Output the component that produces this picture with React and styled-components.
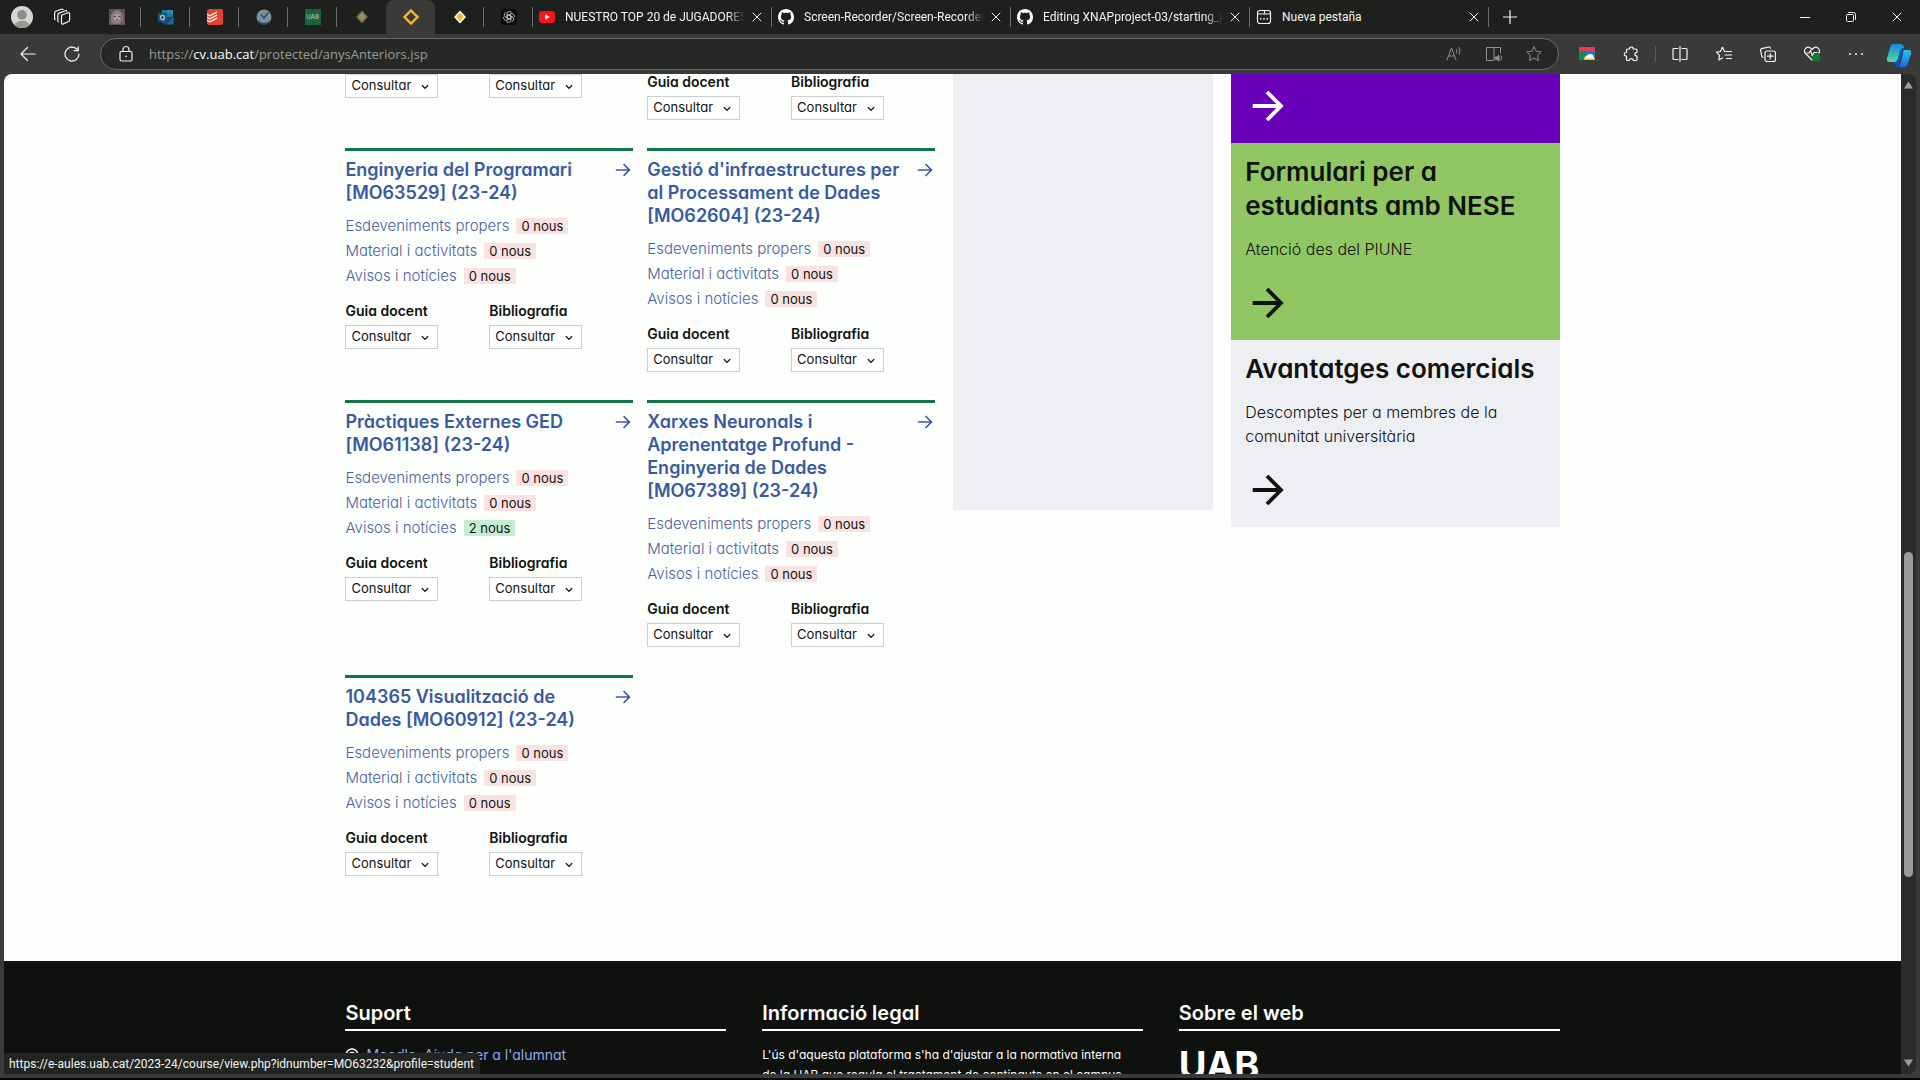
import React from 'react';
import styled, { createGlobalStyle } from 'styled-components';

const Global = createGlobalStyle`
  * { box-sizing: border-box; }
  body { margin: 0; background: #0c0c0c; overflow: hidden; }
  h2, h3, p, ul { margin: 0; padding: 0; }
  ul { list-style: none; }
  a { text-decoration: none; color: inherit; }
  button { border: 0; padding: 0; background: none; color: inherit; font: inherit; }
  svg { display: block; flex: none; }
`;

const ui = `"Open Sans", "Noto Sans", sans-serif`;
const uiSmall = `Roboto, "Open Sans", sans-serif`;

/* ---------- browser window ---------- */

const Window = styled.div`
  display: flex;
  flex-direction: column;
  height: 100vh;
  font-family: ${ui};
  color: #f4f4f2;
  background: #3a3b39;
  border-bottom: 2px solid #050505;
`;

const TabStrip = styled.header`
  display: flex;
  align-items: center;
  height: 34px;
  flex: none;
  background: #1e201d;
`;

const Profile = styled.div`
  display: flex;
  align-items: center;
  gap: 20px;
  width: 92px;
  padding-left: 11px;
  flex: none;
`;

const Pinned = styled.button`
  display: grid;
  place-items: center;
  width: 49px;
  height: 34px;
  flex: none;
  border-radius: 8px 8px 0 0;
  background: ${(p) => (p.$active ? '#3a3b39' : 'transparent')};
  background-image: ${(p) => (p.$divider ? 'linear-gradient(#6c6d6b, #6c6d6b)' : 'none')};
  background-size: 1px 20px;
  background-repeat: no-repeat;
  background-position: right center;
`;

const Tab = styled.div`
  display: flex;
  align-items: center;
  width: 239px;
  height: 20px;
  padding: 0 8px 0 6px;
  flex: none;
  border-right: 1px solid #6c6d6b;
`;

const TabTitle = styled.span`
  flex: 1;
  margin: 0 6px 0 10px;
  overflow: hidden;
  white-space: nowrap;
  font-family: ${uiSmall};
  font-size: 12px;
  line-height: 16px;
  mask-image: ${(p) => (p.$fade ? 'linear-gradient(90deg, #000 90%, transparent)' : 'none')};
`;

const IconButton = styled.button`
  display: grid;
  place-items: center;
  width: ${(p) => p.$w || 20}px;
  height: 20px;
  flex: none;
  color: ${(p) => (p.$dim ? '#8f908e' : '#f4f4f2')};
`;

const WindowControls = styled.div`
  display: flex;
  margin-left: auto;
`;

const Toolbar = styled.div`
  display: flex;
  align-items: center;
  height: 40px;
  padding: 0 0 0 6px;
  flex: none;
`;

const AddressBar = styled.div`
  display: flex;
  align-items: center;
  flex: 1;
  height: 32px;
  margin-left: 6px;
  padding: 0 4px 0 16px;
  border: 1px solid #6a6b69;
  border-radius: 16px;
  background: #262825;
`;

const UrlField = styled.label`
  display: grid;
  align-items: center;
  flex: 1;
  margin-left: 14px;
  font-size: 13px;
  line-height: 20px;
  color: #9a9b99;
  > * { grid-area: 1 / 1; }
  b { font-weight: 400; color: #fff; }
`;

const UrlInput = styled.input`
  width: 100%;
  padding: 0;
  border: 0;
  outline: 0;
  background: transparent;
  color: #fff;
  font: inherit;
`;

const Extensions = styled.div`
  display: flex;
  align-items: center;
  padding-left: 6px;
`;

const Separator = styled.span`
  width: 1px;
  height: 16px;
  margin: 0 2px;
  background: #5a5b59;
`;

const Body = styled.div`
  display: flex;
  flex: 1;
  min-height: 0;
  margin: 0 4px 4px;
  position: relative;
`;

const Page = styled.main`
  display: flex;
  flex-direction: column;
  flex: 1;
  min-width: 0;
  overflow: hidden;
  border-radius: 8px 0 0 0;
  background: #fcfefb;
  color: #10120f;
  font-family: Inter, "Liberation Sans", sans-serif;
  font-feature-settings: "cv11" 1;
`;

const ScrollTrack = styled.div`
  display: flex;
  flex-direction: column;
  align-items: center;
  justify-content: space-between;
  width: 15px;
  padding: 7px 3px;
  border-radius: 0 8px 8px 0;
  background: #2a2b29;
`;

const Thumb = styled.span`
  width: 9px;
  height: 33%;
  margin-top: auto;
  margin-bottom: 182px;
  border-radius: 5px;
  background: #9b9c9a;
`;

const StatusBubble = styled.div`
  position: absolute;
  left: 0;
  bottom: 0;
  height: 21px;
  padding: 0 6px 0 5px;
  border-radius: 0 5px 0 0;
  background: #222421;
  font-family: ${uiSmall};
  font-size: 12px;
  line-height: 22px;
  white-space: nowrap;
`;

/* ---------- campus page ---------- */

const Content = styled.div`
  display: grid;
  grid-template-columns: minmax(0, 589fr) minmax(0, 260fr) minmax(0, 328fr);
  column-gap: 18px;
  align-items: start;
  width: 64%;
  margin: 0 auto;
  padding-bottom: 85px;
  flex: none;
`;

const Courses = styled.div`
  display: grid;
  grid-template-columns: 1fr 1fr;
  gap: 28px 14px;
  align-items: start;
`;

const Card = styled.article`
  border-top: ${(p) => (p.$partial ? 'none' : '3px solid #137547')};
`;

const CardHead = styled.a`
  display: flex;
  justify-content: space-between;
  gap: 10px;
  padding: 7px 2px 9px 0;
  color: #3a5aa0;
  svg { margin-top: 4px; }
`;

const CardTitle = styled.h3`
  font-size: 18px;
  font-weight: 600;
  line-height: 23px;
`;

const NewsRow = styled.li`
  display: flex;
  align-items: center;
  gap: 7px;
  height: 25px;
  font-size: 15px;
  font-weight: 300;
  color: #4a62a2;
`;

const Badge = styled.span`
  height: 16px;
  padding: 0 5px;
  background: ${(p) => (p.$fresh ? '#c5edd3' : '#fbe2e2')};
  color: #10120f;
  font-size: 13px;
  font-weight: 400;
  line-height: 16px;
`;

const Pickers = styled.div`
  display: grid;
  grid-template-columns: 1fr 1fr;
  padding-top: ${(p) => (p.$partial ? 0 : 15)}px;
`;

const PickerLabel = styled.label`
  display: block;
  margin-bottom: 6px;
  font-size: 14px;
  font-weight: 600;
  line-height: 16px;
`;

const SelectBox = styled.div`
  position: relative;
  width: 93px;
  svg { position: absolute; right: 9px; top: 9px; pointer-events: none; }
`;

const Select = styled.select`
  display: block;
  appearance: none;
  width: 100%;
  height: 24px;
  padding: 0 0 2px 5px;
  border: 1px solid #cdcfcf;
  border-radius: 0;
  background: #fff;
  color: #10120f;
  font: 400 13px/18px Inter, "Liberation Sans", sans-serif;
  font-feature-settings: "cv11" 1;
`;

const Agenda = styled.div`
  height: 436px;
  background: #eeeff3;
`;

const Promo = styled.a`
  display: block;
  padding: ${(p) => (p.$partial ? 16 : 12)}px 14px 21px;
  background: ${(p) => p.$bg};
  color: ${(p) => p.$fg || '#10120f'};
  svg { margin-left: 7px; }
`;

const PromoTitle = styled.h2`
  margin-bottom: 14px;
  font-size: 26px;
  font-weight: 600;
  line-height: 34px;
`;

const PromoText = styled.p`
  margin-bottom: 26px;
  font-size: 16px;
  font-weight: 300;
  line-height: 24px;
`;

const Footer = styled.footer`
  flex: 1 0 auto;
  background: #0f110e;
  color: #fff;
`;

const FooterInner = styled.div`
  display: grid;
  grid-template-columns: repeat(3, 1fr);
  gap: 36px;
  width: 64%;
  margin: 0 auto;
  padding-top: 40px;
`;

const FooterTitle = styled.h2`
  height: 30px;
  margin-bottom: 14px;
  border-bottom: 2px solid #fff;
  font-size: 20px;
  font-weight: 600;
  line-height: 24px;
`;

const FooterLink = styled.a`
  display: flex;
  align-items: center;
  gap: 7px;
  font-size: 14px;
  line-height: 20px;
  color: #93a8f0;
`;

const FooterText = styled.p`
  padding-right: 10px;
  font-size: 12px;
  line-height: 20px;
`;

const Logo = styled.p`
  padding-top: 2px;
  font-size: 38px;
  font-weight: 700;
  line-height: 36px;
`;

/* ---------- drawings ---------- */

const Line = ({ s = 16, w = 1, children, vb = 16 }) => (
  <svg width={s} height={s} viewBox={`0 0 ${vb} ${vb}`} fill="none" stroke="currentColor" strokeWidth={w} strokeLinecap="round" strokeLinejoin="round" aria-hidden="true">
    {children}
  </svg>
);

const Close = () => <Line s={10} vb={10}><path d="M1 1l8 8M9 1l-8 8" /></Line>;
const Chevron = () => <Line s={8} vb={8} w={1.2}><path d="M1.200 2.500L4 5.300l2.800-2.800" /></Line>;
const SmallArrow = () => <Line s={16} w={1.7}><path d="M1.500 8h13M9 2.500L14.500 8 9 13.500" /></Line>;
const BigArrow = () => (
  <svg width="32" height="32" viewBox="0 0 32 32" fill="none" stroke="currentColor" strokeWidth="3.8" aria-hidden="true">
    <path d="M.7 16h29M15 2l14 14-14 14" />
  </svg>
);

const Avatar = () => (
  <svg width="22" height="22" viewBox="0 0 22 22">
    <clipPath id="avatar"><circle cx="11" cy="11" r="11" /></clipPath>
    <g clipPath="url(#avatar)">
      <path fill="#d6d6d4" d="M0 0h22v22H0z" />
      <circle cx="11" cy="8.8" r="4.8" fill="#8d8c89" />
      <ellipse cx="11" cy="19" rx="7.2" ry="4.2" fill="#9b9a97" />
    </g>
  </svg>
);
const Workspaces = () => (
  <Line s={18} vb={18} w={1.2}>
    <path d="M8.5 7.2l6.3-2.4q1.8-.5 1.8 1.2v6q0 1-1 1.5l-5.3 2.4q-1.8.7-1.8-1.1zM5.3 13.8q-.5-.4-.5-1.2V7q0-1.4 1.3-1.9l6.2-2.3q1-.3 1.5.5M2.2 11.6q-.6-.3-.6-1.2V5.200q0-1.400 1.200-1.900L8.500 1.200q1-.3 1.500.4" />
  </Line>
);
const Face = () => (
  <svg width="16" height="16" viewBox="0 0 16 16">
    <path fill="#5f5256" d="M0 0h16v16H0z" />
    <path fill="#8d7a80" d="M2 13Q1 2 8 1q7 1 6 10l-3 4H4z" />
    <path fill="#a89898" d="M5 6q3-3 6 0v4q-3 5-6 0z" />
    <path stroke="#54383f" strokeWidth="1" d="M5 7.500h2M9.500 7.500h2M7 11h2" />
    <path fill="#74636a" d="M1 9l3 6H0zM15 9l-2 6h3z" />
  </svg>
);
const Outlook = () => (
  <svg width="16" height="16" viewBox="0 0 16 16">
    <path fill="#1b7798" d="M4 1h11v7H4z" /><path fill="#2b91ad" d="M9.500 1H15v3.500H9.500z" />
    <path fill="#15496f" d="M4 8h11.500v6.500q0 1-1 1H5q-1 0-1-1z" /><path fill="#1e6c93" d="M15.500 8.500v6q0 1-1 1H8z" />
    <rect y="4" width="9" height="9" rx="1" fill="#14508a" />
    <ellipse cx="4.500" cy="8.500" rx="2" ry="2.200" fill="none" stroke="#aebbc4" strokeWidth="1.300" />
  </svg>
);
const Todoist = () => (
  <svg width="16" height="16" viewBox="0 0 16 16">
    <rect width="16" height="16" rx="2" fill="#e44332" />
    <path fill="none" stroke="#fff" strokeWidth="1.300" d="M0 5.200l3 1.600L10 3M0 8.200l3 1.600L10 6M0 11.200l3 1.600L10 9" />
  </svg>
);
const Clock = () => (
  <svg width="16" height="16" viewBox="0 0 16 16">
    <circle cx="8" cy="8" r="7.500" fill="#7f8f9c" /><path fill="#2b4d6e" d="M1 11q2 5 7 5t7-5q-3 3-7 3t-7-3z" />
    <path fill="none" stroke="#234e7e" strokeWidth="1.600" d="M5 5.500L8 9l4.500-5.500" />
  </svg>
);
const UabIcon = styled.span`
  display: block;
  width: 16px;
  height: 16px;
  background: #17633a;
  color: #8db59d;
  font: 700 6px/16px Inter, sans-serif;
  text-align: center;
`;
const Diamond = ({ outer, inner }) => (
  <svg width="18" height="18" viewBox="0 0 18 18">
    <path d="M9 2.500l6 6.500-6 6.500L3 9z" fill={outer} /><path d="M9 4.800l3.800 4.200L9 13.200 5.200 9z" fill={inner} />
  </svg>
);
const DiamondRing = () => (
  <svg width="18" height="18" viewBox="0 0 18 18"><path d="M9 2.500L15.500 9 9 15.500 2.500 9z" fill="none" stroke="#f5b82e" strokeWidth="2.400" /></svg>
);
const Gpt = () => (
  <svg width="16" height="16" viewBox="0 0 16 16">
    <rect width="16" height="16" rx="3" fill="#0a0a0a" />
    <g fill="none" stroke="#c9cac8" strokeWidth=".8">
      {[0, 60, 120, 180, 240, 300].map((a) => (
        <path key={a} transform={`rotate(${a} 8 8)`} d="M6.200 9V4.800Q6.500 2.500 8.800 2.500q1.200.1 2 1M6.200 6.900L9.800 4.900" />
      ))}
    </g>
  </svg>
);
const YouTube = () => (
  <svg width="16" height="16" viewBox="0 0 16 16"><rect y="2" width="16" height="12" rx="3" fill="#f8141c" /><path fill="#fff" d="M6.300 5.300v5.400L10.800 8z" /></svg>
);
const GitHub = () => (
  <svg width="16" height="16" viewBox="0 0 16 16" fill="#fff">
    <path d="M8 0C3.580 0 0 3.580 0 8c0 3.540 2.290 6.530 5.470 7.590.4.070.55-.17.55-.38 0-.19-.01-.82-.01-1.490-2.010.37-2.530-.49-2.690-.94-.09-.23-.48-.94-.82-1.130-.28-.15-.68-.52-.01-.53.63-.01 1.080.58 1.230.82.72 1.210 1.870.87 2.330.66.07-.52.28-.87.51-1.070-1.780-.2-3.640-.89-3.640-3.950 0-.87.31-1.590.82-2.150-.08-.2-.36-1.020.08-2.120 0 0 .67-.21 2.200.82.64-.18 1.320-.27 2-.27s1.360.09 2 .27c1.530-1.040 2.200-.82 2.200-.82.44 1.100.16 1.920.08 2.120.51.56.82 1.270.82 2.150 0 3.070-1.870 3.750-3.650 3.950.29.25.54.73.54 1.480 0 1.070-.01 1.930-.01 2.200 0 .21.15.46.55.38A8.010 8.010 0 0 0 16 8c0-4.420-3.580-8-8-8z" />
  </svg>
);
const NewTab = () => (
  <Line w={1.2}><rect x="1.500" y="1.500" width="13" height="13" rx="2.500" /><path d="M2 5h6.500V2M8.500 5H14" /><path strokeWidth="1.800" d="M4.800 9.800h.01M8 9.800h.01M11.200 9.800h.01" /></Line>
);
const Lock = () => (
  <Line s={18} vb={18} w={1.200}><rect x="3" y="6.500" width="12" height="9.500" rx="1.500" /><path d="M6 6.500V4.500a3 3 0 016 0v2" /><path strokeWidth="1.800" d="M9 11.300h.01" /></Line>
);
const starPath = 'M8 .8l2.200 4.500 5 .7-3.600 3.500.9 5L8 12.200l-4.500 2.300.9-5L.8 6l5-.7z';
const ShopIcon = () => (
  <svg width="16" height="14" viewBox="0 0 16 14">
    <path fill="#178a5b" d="M0 3h8v10H1q-1 0-1-1z" /><path fill="#1b7bd0" d="M7 4h9v6H7z" />
    <path fill="#e33d55" d="M1 0h14q1 0 1 1v3H0V1q0-1 1-1z" /><path fill="#f2b632" d="M5 11h11v1q0 1-1 1H5z" />
    <path fill="#fff" d="M5.500 11.500q-.2-2.500 2-2.500 1-2 3.500-2 4 0 4 4.500z" />
  </svg>
);
const Copilot = () => (
  <svg width="26" height="24" viewBox="0 0 26 24">
    <defs>
      <linearGradient id="cpa" x1="0" y1="0" x2="0" y2="1"><stop stopColor="#168bdf" /><stop offset="1" stopColor="#55d6a0" /></linearGradient>
      <linearGradient id="cpb" x1="0" y1="0" x2="0" y2="1"><stop stopColor="#2ac6f4" /><stop offset="1" stopColor="#1768e8" /></linearGradient>
    </defs>
    <path fill="#0c55c4" d="M9 7l9-3-6 19q-3 0-4-5z" />
    <path fill="url(#cpa)" d="M8 0h6q4 0 4 4-3 0-4 3l-2 7q-1 4-4 4H4q-4 0-3-4L4 4q1-4 4-4z" />
    <path fill="url(#cpb)" d="M18 6h4q4 0 3 4l-3 9q-1 4-4 4h-6q2-1 3-5l2-8q0-3 1-4z" />
  </svg>
);

/* ---------- data ---------- */

const pinned = [
  { name: 'Perfil', icon: <Face />, divider: true },
  { name: 'Outlook', icon: <Outlook />, divider: true },
  { name: 'Todoist', icon: <Todoist />, divider: true },
  { name: 'Clockify', icon: <Clock />, divider: true },
  { name: 'UAB', icon: <UabIcon>UAB</UabIcon>, divider: true },
  { name: 'Campus Virtual', icon: <Diamond outer="#726d60" inner="#a08c55" /> },
  { name: 'Anys anteriors', icon: <DiamondRing />, active: true },
  { name: 'Moodle', icon: <Diamond outer="#fff" inner="#f5b82e" />, divider: true },
  { name: 'ChatGPT', icon: <Gpt />, divider: true },
];

const tabs = [
  { title: 'NUESTRO TOP 20 de JUGADORES', icon: <YouTube />, fade: true },
  { title: 'Screen-Recorder/Screen-Recorder', icon: <GitHub />, fade: true },
  { title: 'Editing XNAPproject-03/starting_p', icon: <GitHub />, fade: true },
  { title: 'Nueva pestaña', icon: <NewTab /> },
];

const courses = [
  { id: 'a', partial: true },
  { id: 'b', partial: true, labels: true },
  { id: 'c', title: 'Enginyeria del Programari [MO63529] (23-24)', news: [0, 0, 0] },
  { id: 'd', title: "Gestió d'infraestructures per al Processament de Dades [MO62604] (23-24)", news: [0, 0, 0] },
  { id: 'e', title: 'Pràctiques Externes GED [MO61138] (23-24)', news: [0, 0, 2] },
  { id: 'f', title: 'Xarxes Neuronals i Aprenentatge Profund - Enginyeria de Dades [MO67389] (23-24)', news: [0, 0, 0] },
  { id: 'g', title: '104365 Visualització de Dades [MO60912] (23-24)', news: [0, 0, 0] },
];

const newsLabels = ['Esdeveniments propers', 'Material i activitats', 'Avisos i notícies'];

function Picker({ id, label }) {
  return (
    <div>
      {label && <PickerLabel htmlFor={id}>{label}</PickerLabel>}
      <SelectBox>
        <Select id={id} aria-label={label ? undefined : 'Consultar'}><option>Consultar</option></Select>
        <Chevron />
      </SelectBox>
    </div>
  );
}

function Course({ course }) {
  const named = !course.partial || course.labels;
  return (
    <Card $partial={course.partial}>
      {course.title && (
        <>
          <CardHead href="#"><CardTitle>{course.title}</CardTitle><SmallArrow /></CardHead>
          <ul>
            {newsLabels.map((label, i) => (
              <NewsRow key={label}>
                <a href="#">{label}</a>
                <Badge $fresh={course.news[i] > 0}>{course.news[i]} nous</Badge>
              </NewsRow>
            ))}
          </ul>
        </>
      )}
      <Pickers $partial={course.partial}>
        <Picker id={`guia-${course.id}`} label={named && 'Guia docent'} />
        <Picker id={`bib-${course.id}`} label={named && 'Bibliografia'} />
      </Pickers>
    </Card>
  );
}

export default function App() {
  return (
    <Window>
      <Global />
      <TabStrip>
        <Profile><Avatar /><Workspaces /></Profile>
        {pinned.map((t) => (
          <Pinned key={t.name} aria-label={t.name} $active={t.active} $divider={t.divider}>{t.icon}</Pinned>
        ))}
        {tabs.map((t) => (
          <Tab key={t.title}>
            {t.icon}
            <TabTitle $fade={t.fade}>{t.title}</TabTitle>
            <IconButton $w={12} aria-label="Tancar pestanya"><Close /></IconButton>
          </Tab>
        ))}
        <IconButton $w={42} aria-label="Pestanya nova"><Line s={14} vb={14} w={1.200}><path d="M7 .5v13M.5 7h13" /></Line></IconButton>
        <WindowControls>
          <IconButton $w={46} aria-label="Minimitzar"><Line s={10} vb={10}><path d="M0 5.500h10" /></Line></IconButton>
          <IconButton $w={46} aria-label="Restaurar"><Line s={10} vb={10}><rect x=".5" y="2.500" width="7" height="7" rx="1" /><path d="M2.500 .5h5q2 0 2 2v5" /></Line></IconButton>
          <IconButton $w={46} aria-label="Tancar"><Close /></IconButton>
        </WindowControls>
      </TabStrip>

      <Toolbar>
        <IconButton $w={44} aria-label="Enrere"><Line w={1.200}><path d="M15 8H1M7.500 1.500L1 8l6.500 6.500" /></Line></IconButton>
        <IconButton $w={44} aria-label="Actualitzar"><Line w={1.200}><path d="M15 8a7 7 0 11-2.500-5.300L14 4.500M14.200 .8v3.900h-3.900" /></Line></IconButton>
        <AddressBar>
          <Lock />
          <UrlField>
            <span>https://<b>cv.uab.cat</b>/protected/anysAnteriors.jsp</span>
            <UrlInput type="text" aria-label="Adreça" />
          </UrlField>
          <IconButton $w={40} $dim aria-label="Llegir en veu alta">
            <Line><path d="M1 14L5.500 2 10 14M2.700 10h5.600M10.500 3.500q1.200 1.500 0 3.500M13 1.500q2.500 3.500 0 7" /></Line>
          </IconButton>
          <IconButton $w={40} $dim aria-label="Lector immersiu">
            <Line s={18} vb={18}><path d="M8 15.500H1.500v-13H9v13M9 2.500h6.500V8M16 11q1.500 2 0 4" /><path fill="currentColor" d="M10.500 12h1.500l2-1.800v6L12 14.400h-1.500z" /></Line>
          </IconButton>
          <IconButton $w={40} $dim aria-label="Preferit"><Line><path d={starPath} /></Line></IconButton>
        </AddressBar>
        <Extensions>
          <IconButton $w={44} aria-label="Extensió"><ShopIcon /></IconButton>
          <IconButton $w={44} aria-label="Extensions">
            <Line w={1.200}><path d="M4.500 3h2q-.2-2 1.800-2t1.800 2H13q1 0 1 1v2.500q-2.200 0-2.200 1.700T14 10v3.500q0 1-1 1h-2.700q-.2-1.800-2-1.800t-2 1.800H4.500q-1 0-1-1V10Q1.300 10 1.300 8.200t2.200-1.700V4q0-1 1-1z" /></Line>
          </IconButton>
          <Separator />
          <IconButton $w={44} aria-label="Pantalla dividida"><Line w={1.200}><path d="M6 2.500H2q-1 0-1 1v9q0 1 1 1h4M10 2.500h4q1 0 1 1v9q0 1-1 1h-4M8 .5v15" /></Line></IconButton>
          <IconButton $w={44} aria-label="Preferits"><Line w={1.200}><path d="M9 5.500H8.500L6.500 1.300l-2 4.200-4 .6 3 3.200-.7 4.700 3.700-2M10 5.500h5.500M9 9h6.500M10.500 12.500h5" /></Line></IconButton>
          <IconButton $w={44} aria-label="Col·leccions"><Line w={1.200}><rect x="5" y="5" width="10.500" height="10.500" rx="2" /><path d="M10.200 7.500v5.500M7.500 10.200H13M3 11.500Q2 11 1.700 10L.6 4.500Q.4 3 1.800 2.600L8.500 1q1.500-.2 2 1.200" /></Line></IconButton>
          <IconButton $w={44} aria-label="Essencials del navegador">
            <Line s={18} vb={18} w={1.200}><path d="M9 15L2.500 8.500q-2-2.500 0-5 3-2.600 5.500 0L9 4.500l1-1q3-2.600 5.500 0 2 2.500.3 4.500M4 8h2l1.500-2.500L9.500 11 11 7.500h3" /><circle cx="13.500" cy="12.500" r="4" fill="#127a2a" stroke="none" /></Line>
          </IconButton>
          <IconButton $w={44} aria-label="Més opcions"><Line w={2}><path d="M2 8h.01M8 8h.01M14 8h.01" /></Line></IconButton>
          <IconButton $w={42} aria-label="Copilot"><Copilot /></IconButton>
        </Extensions>
      </Toolbar>

      <Body>
        <Page>
          <Content>
            <Courses>{courses.map((c) => <Course key={c.id} course={c} />)}</Courses>
            <Agenda />
            <div>
              <Promo href="#" aria-label="Més informació" $partial $bg="#6700b6" $fg="#fff"><BigArrow /></Promo>
              <Promo href="#" $bg="#91c763">
                <PromoTitle>Formulari per a estudiants amb NESE</PromoTitle>
                <PromoText>Atenció des del PIUNE</PromoText>
                <BigArrow />
              </Promo>
              <Promo href="#" $bg="#eeeff3">
                <PromoTitle>Avantatges comercials</PromoTitle>
                <PromoText>Descomptes per a membres de la comunitat universitària</PromoText>
                <BigArrow />
              </Promo>
            </div>
          </Content>
          <Footer>
            <FooterInner>
              <section>
                <FooterTitle>Suport</FooterTitle>
                <FooterLink href="#">
                  <svg width="14" height="14" viewBox="0 0 14 14" fill="none" stroke="#fff" strokeWidth="1.500"><circle cx="7" cy="7" r="6" /><circle cx="7" cy="7" r="2.500" /></svg>
                  Moodle: Ajuda per a l'alumnat
                </FooterLink>
              </section>
              <section>
                <FooterTitle>Informació legal</FooterTitle>
                <FooterText>L'ús d'aquesta plataforma s'ha d'ajustar a la normativa interna de la UAB que regula el tractament de continguts en el campus</FooterText>
              </section>
              <section>
                <FooterTitle>Sobre el web</FooterTitle>
                <Logo>UAB</Logo>
              </section>
            </FooterInner>
          </Footer>
        </Page>
        <ScrollTrack>
          <svg width="9" height="8" viewBox="0 0 9 8"><path fill="#9b9c9a" d="M4.500 .5L9 7.500H0z" /></svg>
          <Thumb />
          <svg width="9" height="8" viewBox="0 0 9 8"><path fill="#9b9c9a" d="M4.500 7.500L9 .5H0z" /></svg>
        </ScrollTrack>
        <StatusBubble>https://e-aules.uab.cat/2023-24/course/view.php?idnumber=MO63232&amp;profile=student</StatusBubble>
      </Body>
    </Window>
  );
}
